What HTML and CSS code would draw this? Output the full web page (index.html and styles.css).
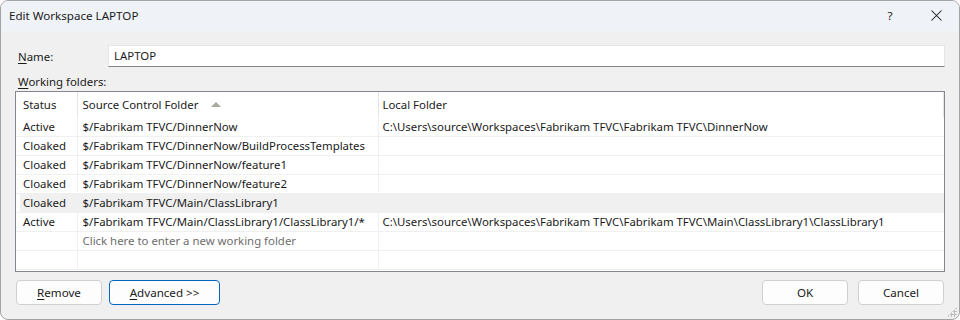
FILE: index.html
```html
<!DOCTYPE html>
<html>
<head>
<meta charset="utf-8">
<link rel="stylesheet" href="styles.css">
</head>
<body>
<div class="window">
  <div class="titlebar">
    <span class="title">Edit Workspace LAPTOP</span>
    <div class="tb-buttons">
      <span class="help">?</span>
      <svg class="close" width="11" height="11" viewBox="0 0 11 11"><path d="M0.5 0.5 L10.5 10.5 M10.5 0.5 L0.5 10.5" stroke="#1a1a1a" stroke-width="1.05" fill="none"/></svg>
    </div>
  </div>
  <div class="content">
    <div class="name-row">
      <label class="label"><u>N</u>ame:</label>
      <div class="textbox">LAPTOP</div>
    </div>
    <div class="label wf"><u>W</u>orking folders:</div>
    <div class="grid">
      <table>
        <colgroup><col class="c1"><col class="c2"><col class="c3"></colgroup>
        <thead>
          <tr><th>Status</th><th>Source Control Folder <span class="sort"></span></th><th>Local Folder</th></tr>
        </thead>
        <tbody>
          <tr><td>Active</td><td>$/Fabrikam TFVC/DinnerNow</td><td>C:\Users\source\Workspaces\Fabrikam TFVC\Fabrikam TFVC\DinnerNow</td></tr>
          <tr><td>Cloaked</td><td>$/Fabrikam TFVC/DinnerNow/BuildProcessTemplates</td><td></td></tr>
          <tr><td>Cloaked</td><td>$/Fabrikam TFVC/DinnerNow/feature1</td><td></td></tr>
          <tr><td>Cloaked</td><td>$/Fabrikam TFVC/DinnerNow/feature2</td><td></td></tr>
          <tr class="sel"><td>Cloaked</td><td>$/Fabrikam TFVC/Main/ClassLibrary1</td><td></td></tr>
          <tr><td>Active</td><td>$/Fabrikam TFVC/Main/ClassLibrary1/ClassLibrary1/*</td><td>C:\Users\source\Workspaces\Fabrikam TFVC\Fabrikam TFVC\Main\ClassLibrary1\ClassLibrary1</td></tr>
          <tr><td></td><td class="ph">Click here to enter a new working folder</td><td></td></tr>
          <tr class="last"><td></td><td></td><td></td></tr>
        </tbody>
      </table>
    </div>
    <div class="buttons">
      <div class="left">
        <button class="btn"><u>R</u>emove</button>
        <button class="btn adv"><u>A</u>dvanced &gt;&gt;</button>
      </div>
      <div class="right">
        <button class="btn">OK</button>
        <button class="btn">Cancel</button>
      </div>
    </div>
  </div>
  <div class="grip"></div>
</div>
</body>
</html>
```
FILE: styles.css
```css
* { box-sizing: border-box; }
html, body { margin: 0; padding: 0; background: #ffffff; }
body { font-family: "Noto Sans", "Open Sans", sans-serif; font-size: 11.4px; color: #1a1a1a; }

.window {
  position: relative;
  width: 960px;
  height: 320px;
  border: 1px solid #a3a3a3;
  border-radius: 8px;
  background: #f0f0f0;
  overflow: hidden;
}

.titlebar {
  height: 30px;
  background: #eff3f7;
  display: flex;
  align-items: center;
  justify-content: space-between;
  padding: 0 0 2px 8px;
}
.title { font-size: 11.6px; }
.tb-buttons { display: flex; align-items: center; height: 100%; }
.help { width: 20px; text-align: center; font-size: 11.6px; }
.close { margin: 0 17px 0 31px; }

.content { padding: 14px 14px 0 14px; }

.name-row { display: flex; align-items: center; height: 22px; }
.name-row .label { width: 93px; padding-left: 3px; }
.textbox {
  flex: 1;
  height: 22px;
  background: #fff;
  border: 1px solid #e6e6e6;
  border-bottom: 1px solid #868686;
  padding: 2px 0 0 5px;
}
.wf { padding-left: 3px; margin-top: 6px; height: 17px; line-height: 17px; }
u { text-decoration-thickness: 1px; text-underline-offset: 2px; }

.grid {
  margin-top: 1px;
  height: 181px;
  border: 1px solid #828790;
  background: #fff;
  overflow: hidden;
}
table { width: 100%; border-collapse: collapse; table-layout: fixed; }
col.c1 { width: 61px; }
col.c2 { width: 301px; }
th {
  height: 25px;
  font-weight: normal;
  text-align: left;
  padding: 0 0 0 7px;
  border-right: 1px solid #e5e5e5;
  white-space: nowrap;
}
th:nth-child(2) { padding-left: 5px; }
th:last-child { padding-left: 4px; }
td {
  height: 19px;
  padding: 0 0 0 7px;
  border-right: 1px solid #f0f0f0;
  border-bottom: 1px solid #f0f0f0;
  white-space: nowrap;
  overflow: hidden;
}
td:nth-child(2) { padding-left: 5px; }
td:last-child { border-right: none; padding-left: 4px; }
tr.sel td { background: #f0f0f0; }
tr.sel td:first-child { background: linear-gradient(to right, #fff 4px, #f0f0f0 4px); }
td.ph { color: #6d6d6d; }
.sort {
  display: inline-block;
  width: 0; height: 0;
  border-left: 5px solid transparent;
  border-right: 5px solid transparent;
  border-bottom: 5px solid #a8a8a0;
  margin-left: 10px;
  vertical-align: 2px;
}

.buttons {
  display: flex;
  justify-content: space-between;
  margin-top: 8px;
  padding: 0 1px 0 1px;
}
.left, .right { display: flex; gap: 7px; }
.right { gap: 10px; }
.btn {
  font-family: inherit;
  font-size: 11.6px;
  color: #1a1a1a;
  height: 25px;
  width: 86px;
  background: #fdfdfd;
  border: 1px solid #d0d0d0;
  border-radius: 4px;
  padding: 0;
}
.btn.adv { width: 111px; border-color: #0067c0; }

.grip {
  position: absolute;
  right: 2px; bottom: 2px;
  width: 10px; height: 10px;
  background-image: radial-gradient(circle, #bdbdbd 1px, transparent 1.2px);
  background-size: 3px 3px;
  clip-path: polygon(100% 0, 100% 100%, 0 100%);
}
```
